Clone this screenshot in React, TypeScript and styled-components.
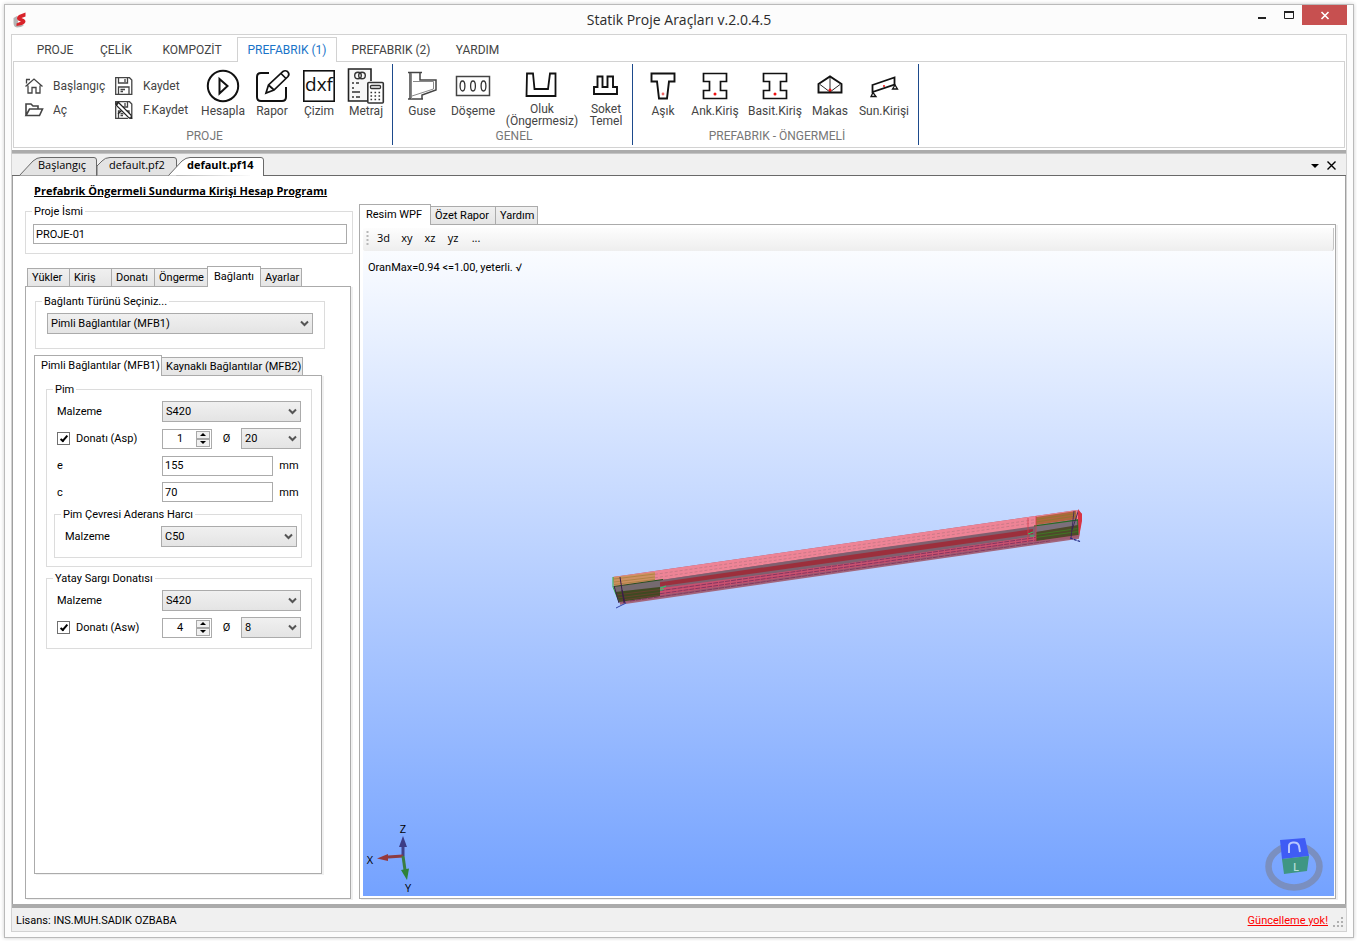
import React from "react";
import styled, { createGlobalStyle, css } from "styled-components";

const sans = `Roboto, "Liberation Sans", Arial, sans-serif`;
const ui = `"Open Sans", "Segoe UI", sans-serif`;

const GlobalStyle = createGlobalStyle`
  *, *::before, *::after { box-sizing: border-box; }
  body { margin: 0; background: #fff; font-family: ${sans}; font-size: 11px; color: #000; }
  button, input, select { font: inherit; color: inherit; margin: 0; }
  button { cursor: pointer; }
  svg { display: block; }
`;

/* ---------- window frame ---------- */

const Page = styled.div`
  display: flex;
  min-height: 100vh;
  padding: 4px 3px 3px 4px;
`;

const Window = styled.div`
  flex: 1;
  min-width: 0;
  display: flex;
  flex-direction: column;
  border: 1px solid #bababa;
  background: #fcfcfc;
  box-shadow: 0 0 4px rgba(0, 0, 0, 0.2);
  padding: 0 6px 5px;
`;

const TitleBar = styled.header`
  display: grid;
  grid-template-columns: 1fr auto 1fr;
  height: 29px;
`;

const AppLogo = styled.svg`
  align-self: center;
  margin-left: 2px;
`;

const AppTitle = styled.h1`
  margin: 0;
  font: 400 14px/30px ${ui};
  color: #2b2b2b;
`;

const WindowButtons = styled.div`
  display: flex;
  justify-content: flex-end;
  align-items: flex-start;
`;

const WindowButton = styled.button<{ $close?: boolean }>`
  display: flex;
  justify-content: center;
  width: ${(p) => (p.$close ? 45 : 27)}px;
  height: 20px;
  padding: 0;
  border: 0;
  background: ${(p) => (p.$close ? "#c75050" : "transparent")};
`;

const Client = styled.div`
  flex: 1;
  display: flex;
  flex-direction: column;
  border: 1px solid #d2d2d2;
  background: #fff;
`;

/* ---------- ribbon ---------- */

const RibbonTabs = styled.nav`
  display: flex;
  align-items: flex-end;
  height: 27px;
  padding-left: 13px;
  margin-bottom: -1px;
`;

const RibbonTab = styled.button<{ $w: number; $active?: boolean }>`
  width: ${(p) => p.$w}px;
  height: 25px;
  padding: 0;
  border: 1px solid ${(p) => (p.$active ? "#d2d2d2" : "transparent")};
  border-bottom: 0;
  background: ${(p) => (p.$active ? "#fff" : "transparent")};
  color: ${(p) => (p.$active ? "#1a74c8" : "#444")};
  font: 400 12px/22px ${sans};
  white-space: nowrap;
  position: relative;
`;

const RibbonBody = styled.div`
  display: flex;
  margin: 0 1px 2px;
  height: 87px;
  padding: 2px 0;
  border: 1px solid #d2d2d2;
`;

const RibbonGroup = styled.section<{ $pad: number; $w: number }>`
  display: flex;
  flex-direction: column;
  width: ${(p) => p.$w}px;
  border-right: 1px solid #1d4a8c;
  padding-top: 6px;
  & > div {
    padding-left: ${(p) => p.$pad}px;
  }
`;

const GroupItems = styled.div`
  display: flex;
  height: 58px;
`;

const GroupName = styled.h2`
  margin: 0;
  padding-left: 3px;
  text-align: center;
  font: 400 12px/16px ${sans};
  color: #777;
`;

const SmallColumn = styled.div<{ $w: number }>`
  display: flex;
  flex-direction: column;
  width: ${(p) => p.$w}px;
  padding-top: 4px;
`;

const SmallButton = styled.button`
  display: flex;
  align-items: center;
  gap: 9px;
  height: 24px;
  padding: 0;
  border: 0;
  background: transparent;
  font: 400 12px/16px ${sans};
  color: #444;
`;

const LargeButton = styled.button<{ $w: number; $two?: boolean }>`
  display: flex;
  flex-direction: column;
  align-items: center;
  width: ${(p) => p.$w}px;
  padding: 0;
  border: 0;
  background: transparent;
  font: 400 12px/${(p) => (p.$two ? 12 : 16)}px ${sans};
  color: #444;
  white-space: pre;
  svg {
    margin-bottom: 1px;
    flex: none;
    overflow: visible;
  }
`;

/* ---------- document tabs ---------- */

const DocStrip = styled.div`
  display: flex;
  align-items: flex-end;
  height: 26px;
  border-top: 3px solid #ababab;
  border-bottom: 1px solid #696969;
  background: #f0f0f0;
  box-shadow: inset 0 1px 0 #c4c4c4;
  padding: 0 10px 0 7px;
`;

const DocTab = styled.button<{ $w: number; $start: number; $active?: boolean }>`
  position: relative;
  width: ${(p) => p.$w}px;
  height: 19px;
  margin: 0 0 -1px ${(p) => (p.$active ? -9 : 0)}px;
  padding: 0 0 4px ${(p) => p.$start}px;
  border: 0;
  background: transparent;
  text-align: left;
  white-space: nowrap;
  font: ${(p) => (p.$active ? 700 : 400)} 11px/15px ${ui};
  svg {
    position: absolute;
    inset: 0;
  }
  span {
    position: relative;
  }
`;

const DocTools = styled.div`
  display: flex;
  align-items: center;
  gap: 8px;
  margin-left: auto;
  height: 20px;
`;

const IconButton = styled.button`
  display: flex;
  padding: 0;
  border: 0;
  background: transparent;
`;

/* ---------- workspace ---------- */

const Workspace = styled.main`
  flex: 1;
  display: flex;
  gap: 6px;
  border: solid #a0a0a0;
  border-width: 0 1px;
  padding: 0 9px 5px 12px;
`;

const Side = styled.aside`
  display: flex;
  flex-direction: column;
  flex: none;
  width: 328px;
  padding-top: 8px;
`;

const ProgramTitle = styled.h2`
  margin: 0 0 6px 9px;
  font: 700 11px/14px ${ui};
  text-decoration: underline;
  white-space: nowrap;
`;

const Group = styled.fieldset<{ $inset?: string }>`
  min-width: 0;
  margin: ${(p) => p.$inset ?? "0"};
  padding: 0;
  border: 1px solid #dcdcdc;
`;

const GroupBody = styled.div<{ $pad: string }>`
  padding: ${(p) => p.$pad};
`;

const Legend = styled.legend`
  padding: 2px 2px 0;
  margin-left: 6px;
  line-height: 12px;
`;

const TextBox = styled.input`
  display: block;
  width: 100%;
  height: 20px;
  padding: 0 2px;
  border: 1px solid #ababab;
  border-radius: 0;
  background: #fff;
  outline: none;
`;

const Tabs = styled.div<{ $indent?: number }>`
  display: flex;
  align-items: flex-end;
  height: 21px;
  margin-bottom: -1px;
  padding-left: ${(p) => p.$indent ?? 1}px;
`;

const Tab = styled.button<{ $w: number; $active?: boolean }>`
  position: relative;
  flex: none;
  width: ${(p) => p.$w}px;
  height: 19px;
  padding: 0 0 0 4px;
  border: 1px solid #ababab;
  margin-left: -1px;
  background: linear-gradient(#f0f0f0, #e5e5e5);
  text-align: left;
  line-height: 17px;
  white-space: nowrap;
  ${(p) =>
    p.$active &&
    css`
      z-index: 1;
      height: 21px;
      padding: 0 0 2px 6px;
      border-bottom: 0;
      background: #fff;
    `}
`;

const TabPage = styled.div<{ $pad: string }>`
  flex: 1;
  display: flex;
  flex-direction: column;
  padding: ${(p) => p.$pad};
  border: 1px solid #ababab;
  background: #fff;
  box-shadow: 2px 1px 0 #f0f0f0;
`;

const SideTabs = styled.div<{ $inset: string }>`
  flex: 1;
  display: flex;
  flex-direction: column;
  margin: ${(p) => p.$inset};
`;

const Row = styled.div<{ $h?: number }>`
  display: flex;
  align-items: center;
  height: ${(p) => p.$h ?? 21}px;
`;

const Rows = styled.div`
  display: flex;
  flex-direction: column;
  gap: 6px;
`;

const RowLabel = styled.label<{ $w?: number }>`
  display: flex;
  align-items: center;
  flex: none;
  gap: 6px;
  width: ${(p) => p.$w ?? 115}px;
  padding-left: 10px;
`;

const Field = styled.div<{ $w: number }>`
  flex: none;
  width: ${(p) => p.$w}px;
`;

const Unit = styled.span<{ $w?: number }>`
  width: ${(p) => p.$w ?? 29}px;
  text-align: center;
`;

const Check = styled.input`
  appearance: none;
  position: relative;
  width: 13px;
  height: 13px;
  border: 1px solid #707070;
  background: #fff;
  &:checked::after {
    content: "";
    position: absolute;
    left: 4px;
    top: 1px;
    width: 4px;
    height: 8px;
    border: solid #000;
    border-width: 0 2px 2px 0;
    transform: rotate(40deg);
  }
`;

const SelectBox = styled.div<{ $w?: number }>`
  position: relative;
  flex: none;
  width: ${(p) => (p.$w ? `${p.$w}px` : "100%")};
  height: 21px;
  select {
    appearance: none;
    width: 100%;
    height: 21px;
    padding: 0 16px 0 3px;
    border: 1px solid #ababab;
    border-radius: 0;
    background: linear-gradient(#f0f0f0, #e4e4e4);
    outline: none;
  }
  svg {
    position: absolute;
    right: 4px;
    top: 7px;
    pointer-events: none;
  }
`;

const Spin = styled.div`
  display: flex;
  flex: none;
  width: 50px;
  height: 20px;
  padding: 1px;
  border: 1px solid #ababab;
  background: #fff;
  input {
    appearance: textfield;
    width: 32px;
    padding: 0;
    border: 0;
    outline: none;
    text-align: center;
    background: transparent;
  }
  input::-webkit-inner-spin-button {
    appearance: none;
  }
`;

const SpinButtons = styled.div`
  display: flex;
  flex-direction: column;
  button {
    display: flex;
    align-items: center;
    justify-content: center;
    width: 14px;
    height: 8px;
    padding: 0;
    border: 1px solid #a8a8a8;
    background: #f0f0f0;
  }
`;

/* ---------- viewer ---------- */

const Viewer = styled.section`
  flex: 1;
  min-width: 0;
  display: flex;
  flex-direction: column;
  padding-top: 28px;
`;

const ToolStrip = styled.div`
  display: flex;
  align-items: center;
  height: 23px;
  padding: 0 0 3px 3px;
  border-right: 1px solid #c4c4c4;
  border-radius: 2px 0 3px 2px;
  background: linear-gradient(#fdfdfd, #eeeeee);
`;

const ToolButton = styled.button<{ $w: number }>`
  width: ${(p) => p.$w}px;
  padding: 0;
  border: 0;
  background: transparent;
  font: 400 11px/18px ${ui};
`;

const Canvas = styled.div`
  flex: 1;
  position: relative;
  min-height: 400px;
  background: linear-gradient(#fafcff, #74a2ff);
`;

const ResultLine = styled.p`
  margin: 0;
  padding: 10px 5px;
  line-height: 14px;
`;

const Scene = styled.svg`
  position: absolute;
  inset: 0;
  width: 100%;
  height: 100%;
`;

const Axes = styled.svg`
  position: absolute;
  left: 0;
  bottom: 0;
`;

const ViewCube = styled.svg`
  position: absolute;
  right: 10px;
  bottom: 2px;
`;

/* ---------- status bar ---------- */

const StatusBar = styled.footer`
  display: flex;
  align-items: center;
  height: 27px;
  padding: 2px 2px 0 4px;
  border-top: 4px solid #ababab;
  background: #f0f0f0;
  a {
    margin-left: auto;
    margin-right: 1px;
    color: #f00;
  }
`;

/* ---------- small pieces ---------- */

function Select({ w, value, label, id }: { w?: number; value: string; label?: string; id?: string }) {
  return (
    <SelectBox $w={w}>
      <select id={id} aria-label={label} defaultValue={value}>
        <option>{value}</option>
      </select>
      <svg width="9" height="8" viewBox="0 0 9 8">
        <path d="M1 1.5 L4.5 5 L8 1.5" fill="none" stroke="#555" strokeWidth="2" />
      </svg>
    </SelectBox>
  );
}

function Spinner({ value, label }: { value: number; label: string }) {
  return (
    <Spin>
      <input type="number" aria-label={label} defaultValue={value} />
      <SpinButtons>
        <button aria-label="+">
          <svg width="6" height="3"><path d="M0 3 L3 0 L6 3Z" /></svg>
        </button>
        <button aria-label="-">
          <svg width="6" height="3"><path d="M0 0 L3 3 L6 0Z" /></svg>
        </button>
      </SpinButtons>
    </Spin>
  );
}

const Big = ({ children }: { children: React.ReactNode }) => (
  <svg width="38" height="32" viewBox="-3 0 38 32" fill="none" stroke="#111" strokeWidth="1.6">
    {children}
  </svg>
);

const IconPlay = () => (
  <Big>
    <circle cx="16" cy="16" r="15.2" strokeWidth="2" />
    <path d="M12.5 9 L20.5 16 L12.5 23.5Z" strokeWidth="2" />
  </Big>
);

const IconEdit = () => (
  <Big>
    <path d="M13 3 H5 Q1 3 1 7 V27 Q1 31 5 31 H26 Q30 31 30 27 V17" strokeWidth="2" />
    <path d="M10 23 L12.5 15 L27 1.5 Q29 0 31.5 1.5 Q34 4 32 6.5 L18 20Z M12.5 15 L18 20 M25 3.5 L30 8.5" strokeWidth="1.7" />
  </Big>
);

const IconDxf = () => (
  <Big>
    <rect x="0.8" y="0.8" width="30.4" height="30.4" />
    <text x="16" y="21" textAnchor="middle" fontFamily="Open Sans, sans-serif" fontSize="19" fill="#111" stroke="none">
      dxf
    </text>
  </Big>
);

const IconQuantity = () => (
  <Big>
    <path d="M17 31 H-1.5 V-1 H21 V11" fill="#f7f7f7" stroke="#222" />
    <circle cx="8" cy="5.5" r="3.3" stroke="#333" strokeWidth="1.4" />
    <circle cx="12" cy="5.5" r="3.3" stroke="#333" strokeWidth="1.4" />
    <path d="M2 13 H4 M6 13 H9 M2 18 H4 M2 22 H10 M2 27 H4 M6 27 H10" stroke="#333" strokeWidth="1.4" />
    <rect x="17.8" y="12.5" width="15.5" height="20.5" rx="1" fill="#fff" stroke="#333" />
    <rect x="20.5" y="15.5" width="10" height="3" rx="1" stroke="#333" strokeWidth="1.3" />
    <path d="M20.5 22.5 H31 M20.5 26 H31 M20.5 29.5 H31" stroke="#333" strokeWidth="1.6" strokeDasharray="1.6 2.4" />
  </Big>
);

const IconCorbel = () => (
  <Big>
    <path d="M2 2.5 H16 M4 2.5 V29 M2 29 H17 M14 2.5 V10 H30 V20 L16 25 V29" stroke="#444" strokeWidth="1.5" />
    <path d="M5.5 3 V29 M7 11.5 H27.5 V19 L6 26" stroke="#888" strokeWidth="1" />
  </Big>
);

const IconSlab = () => (
  <Big>
    <rect x="-0.5" y="6.5" width="33" height="19" stroke="#444" strokeWidth="1.5" />
    <ellipse cx="5.5" cy="16" rx="2.4" ry="5" stroke="#333" strokeWidth="1.3" />
    <ellipse cx="16" cy="16" rx="2.4" ry="5" stroke="#333" strokeWidth="1.3" />
    <ellipse cx="26.5" cy="16" rx="2.4" ry="5" stroke="#333" strokeWidth="1.3" />
  </Big>
);

const IconGutter = () => (
  <Big>
    <path d="M1 3.5 H7 L8.5 19 H22 L24 3.5 H29.5 V26 H0.5Z" strokeWidth="1.8" />
  </Big>
);

const IconSocket = () => (
  <Big>
    <path d="M7.5 6.5 H12.5 V17 H17.5 V6.5 H23 V17 H27 V24 H4 V17 H7.5Z" strokeWidth="1.9" />
  </Big>
);

const IconPurlin = () => (
  <Big>
    <path d="M4.5 3.5 H27.5 V11.5 H22 L20 28.5 H12 L10 11.5 H4.5Z" strokeWidth="1.9" />
    <circle cx="16" cy="24" r="1.4" fill="#e66" stroke="none" />
  </Big>
);

const IconBeam = () => (
  <Big>
    <path d="M4.5 3.5 H27.5 V11.5 H21.5 V20.5 H27.5 V28.5 H4.5 V20.5 H10.5 V11.5 H4.5Z" strokeWidth="1.7" />
    <circle cx="16" cy="24" r="1.5" fill="#e11" stroke="none" />
  </Big>
);

const IconTruss = () => (
  <Big>
    <path d="M4.5 14 L16 6.5 L27.5 14 V22.5 H4.5Z" strokeWidth="1.9" />
    <path d="M16 7 V22 M6 14.5 L16 22 L26 14.5" strokeWidth="0.9" />
    <circle cx="16" cy="20" r="1.5" fill="#e11" stroke="none" />
  </Big>
);

const IconCanopy = () => (
  <Big>
    <path d="M4.5 15 L26.5 7.5 V14.5 L4.5 22Z" strokeWidth="1.8" />
    <path d="M5 22.5 L3 26.5 H8Z M27 15 L24.5 19 H29.5Z" strokeWidth="1.3" />
    <circle cx="16" cy="16" r="1" fill="#e11" stroke="none" />
  </Big>
);

const Small = ({ children }: { children: React.ReactNode }) => (
  <svg width="20" height="20" viewBox="0 0 20 20" fill="none" stroke="#444" strokeWidth="1.3">
    {children}
  </svg>
);

const IconHome = () => (
  <Small>
    <path d="M1.5 10.5 L10 3 L18.5 10.5 M4 9.5 V17 H8 V11.5 H12 V17 H16 V9.5 M2.5 3.5 V7.5 M2 3.5 H6" />
  </Small>
);

const IconFolder = () => (
  <Small>
    <path d="M2 15.5 V4 H7 L9 6 H14 V9 M2 15.5 L5.5 9 H18.5 L15.5 15.5Z" strokeWidth="1.6" />
  </Small>
);

const IconSave = ({ slashed }: { slashed?: boolean }) => (
  <Small>
    <path d="M1.7 1.7 H15.5 L17.8 4 V18.3 H1.7Z M4.5 2 V7 H13.5 V2 M11 3 V6 M4.5 18 V11 H15 V18 M6.5 13.5 H11 M6.5 15.5 H9" />
    {slashed && (
      <>
        <path d="M3 4 L16 17.5" stroke="#fff" strokeWidth="4" />
        <path d="M2 3 L4.5 2.5 L17 15 L17.5 18 L14.5 17.5 L2.5 5.5Z M4.5 2.5 L2.5 5.5 M4 14 L7 11" strokeWidth="1.2" stroke="#222" />
      </>
    )}
  </Small>
);

/* Beam seen in perspective: long faces, rebar lines and the two end blocks. */
function BeamDrawing() {
  return (
    <Scene viewBox="363 251 971 645" preserveAspectRatio="xMidYMid meet" aria-hidden="true">
      <polygon points="613,577 1077,510 1082,514 1079,538 620,604" fill="#9c5b72" />
      <polygon points="613,577 1077,510 1079,522 850,552 614,587" fill="#ee8496" />
      <path d="M640 576.5 L1060 516 M650 578.5 L1060 519" stroke="#c27684" strokeWidth="0.8" strokeDasharray="3 2" fill="none" />
      <polygon points="614,587 850,552 1079,520 1079,530 850,563 616,594" fill="#80606f" />
      <polygon points="655,583 850,555 1033,529 1033,534 850,560 655,587" fill="#9c2f3c" />
      <polygon points="617,594 850,563 1079,530 1079,535 850,568 619,601" fill="#c9506f" />
      <path d="M630 595 L1050 535.5 M630 598 L1050 538 M630 601 L1050 541" stroke="#843660" strokeWidth="1" strokeDasharray="5 1" fill="none" />
      <path d="M620 604 L1079 538" stroke="#a3667c" strokeWidth="1.4" />

      <polygon points="613,577 655,572 655,580 614,586" fill="#cf9062" />
      <path d="M614 579 L655 574 M614 582 L655 577 M614 584.5 L655 579.5" stroke="#a87f3e" strokeWidth="0.8" />
      <polygon points="615,587 660,580 660,587 616,592" fill="#756a70" />
      <polygon points="615,592 660,587 660,596 619,602" fill="#3f4a22" />
      <path d="M616 595 L660 589.5 M617 598 L660 592.5 M618 600.5 L660 595" stroke="#6d4030" strokeWidth="0.8" />
      <path d="M613 577 V587 L619 602" stroke="#2fae3c" strokeWidth="1" fill="none" />
      <path d="M614 586.5 L663 579.5" stroke="#24501d" strokeWidth="1.2" />
      <path d="M614 586 L619 603 M620 577 L624 603 M622 590 L625 603" stroke="#3a1c4c" strokeWidth="1" fill="none" />
      <path d="M616 608 L626 603" stroke="#3344aa" strokeWidth="1" />
      <path d="M661 588 L666 586 M662 590 L664 589 M661 591 V587" stroke="#27d36b" strokeWidth="1" />

      <polygon points="1036,517 1076,511 1077,519 1036,525" fill="#b0653f" />
      <path d="M1036 519.5 L1076 513.5 M1036 522 L1076 516" stroke="#8a7a2c" strokeWidth="0.8" />
      <polygon points="1036,525 1078,519 1078,526 1036,532" fill="#7b6f7b" />
      <polygon points="1036,532 1078,525 1078,535 1036,541" fill="#4d4a2a" />
      <path d="M1036 534.5 L1078 528.5 M1036 537.5 L1078 531.5" stroke="#3f7a22" strokeWidth="0.9" />
      <path d="M1034 526 L1078 520 V535" stroke="#256b20" strokeWidth="1.2" fill="none" />
      <path d="M1028 518 V541 M1036 516 V541" stroke="#d63b4d" strokeWidth="0.8" />
      <path d="M1074 511 L1071 538 M1078 512 L1072 530" stroke="#35205a" strokeWidth="0.8" />
      <polygon points="1078,509 1082,514 1082,521 1079,537 1078,520" fill="#d83444" />
      <path d="M1070 538 L1080 541.5" stroke="#222a88" strokeWidth="1.2" strokeDasharray="3 1" />
      <path d="M1028 534 L1033 532 M1030 536 H1034" stroke="#27d36b" strokeWidth="1" />
    </Scene>
  );
}

function AxisTriad() {
  return (
    <Axes width="60" height="80" viewBox="363 816 60 80" fontFamily="Open Sans, sans-serif" fontSize="11" textAnchor="middle">
      <path d="M403 856 V846" stroke="#41418a" strokeWidth="3" />
      <polygon points="403,836 407,847 399,847" fill="#3c3c86" />
      <path d="M403 856 L388 857" stroke="#8c3c42" strokeWidth="3" />
      <polygon points="377,858.5 388,854 388,861" fill="#96393c" />
      <path d="M403 856 L405 870" stroke="#3a7d42" strokeWidth="3" />
      <polygon points="407,880 401,870 409,868.5" fill="#2f8238" />
      <text x="403" y="833">Z</text>
      <text x="370" y="864">X</text>
      <text x="408" y="892">Y</text>
    </Axes>
  );
}

function CubeNavigator() {
  return (
    <ViewCube width="60" height="60" viewBox="1264 834 60 60" fontFamily="Open Sans, sans-serif" textAnchor="middle">
      <ellipse cx="1294" cy="866.5" rx="25.5" ry="21" fill="none" stroke="#7a8fc0" strokeWidth="6.5" />
      <polygon points="1280,840 1305,838 1309,856 1282,859" fill="#3f5cf5" />
      <polygon points="1282,859 1309,856 1307,871 1284,874" fill="#3f9683" />
      <path d="M1289 853 V846 Q1289 843 1293 842.5 Q1298 842 1299 846 L1300 852" fill="none" stroke="#b9c8ff" strokeWidth="2" />
      <text x="1296" y="871" fontSize="11" fontWeight="600" fill="#b5dfd8">L</text>
    </ViewCube>
  );
}

/* ---------- application ---------- */

export default function App() {
  return (
    <Page>
      <GlobalStyle />
      <Window>
        <TitleBar>
          <AppLogo width="16" height="16" viewBox="0 0 16 16">
            <path d="M0.5 6 L4 4 L5 9 V12 L11 13.5 Q8 15.5 4 15.5 Q0.5 15 0.5 11Z" fill="#b4b4b4" />
            <path d="M12.5 0.5 L6 3 Q3.5 4.5 4 7 Q4.5 8.5 8 9.5 L3.5 11.5 V14 L9 13 Q12.5 11.5 12.5 9 Q12 7 8.5 6 L12.5 4.5Z" fill="#d8232a" />
          </AppLogo>
          <AppTitle>Statik Proje Araçları v.2.0.4.5</AppTitle>
          <WindowButtons>
            <WindowButton aria-label="Küçült">
              <svg width="10" height="20"><path d="M1 13 H9" stroke="#222" strokeWidth="2" /></svg>
            </WindowButton>
            <WindowButton aria-label="Büyüt">
              <svg width="10" height="20"><path d="M0.5 6 V13.5 H9.5 V6" stroke="#222" fill="none" /><path d="M0 7 H10" stroke="#222" strokeWidth="2" /></svg>
            </WindowButton>
            <WindowButton $close aria-label="Kapat">
              <svg width="10" height="20"><path d="M1.5 7 L8.5 14 M8.5 7 L1.5 14" stroke="#fff" strokeWidth="1.6" /></svg>
            </WindowButton>
          </WindowButtons>
        </TitleBar>

        <Client>
          <RibbonTabs>
            <RibbonTab $w={60}>PROJE</RibbonTab>
            <RibbonTab $w={62}>ÇELİK</RibbonTab>
            <RibbonTab $w={90}>KOMPOZİT</RibbonTab>
            <RibbonTab $w={100} $active>PREFABRIK (1)</RibbonTab>
            <RibbonTab $w={108}>PREFABRIK (2)</RibbonTab>
            <RibbonTab $w={65}>YARDIM</RibbonTab>
          </RibbonTabs>
          <RibbonBody>
            <RibbonGroup $w={379} $pad={10}>
              <GroupItems>
                <SmallColumn $w={90}>
                  <SmallButton><IconHome />Başlangıç</SmallButton>
                  <SmallButton><IconFolder />Aç</SmallButton>
                </SmallColumn>
                <SmallColumn $w={84}>
                  <SmallButton><IconSave />Kaydet</SmallButton>
                  <SmallButton><IconSave slashed />F.Kaydet</SmallButton>
                </SmallColumn>
                <LargeButton $w={50}><IconPlay />Hesapla</LargeButton>
                <LargeButton $w={48}><IconEdit />Rapor</LargeButton>
                <LargeButton $w={46}><IconDxf />Çizim</LargeButton>
                <LargeButton $w={48}><IconQuantity />Metraj</LargeButton>
              </GroupItems>
              <GroupName>PROJE</GroupName>
            </RibbonGroup>
            <RibbonGroup $w={240} $pad={3}>
              <GroupItems>
                <LargeButton $w={52}><IconCorbel />Guse</LargeButton>
                <LargeButton $w={50}><IconSlab />Döşeme</LargeButton>
                <LargeButton $w={88} $two><IconGutter />{"Oluk\n(Öngermesiz)"}</LargeButton>
                <LargeButton $w={40} $two><IconSocket />{"Soket\nTemel"}</LargeButton>
              </GroupItems>
              <GroupName>GENEL</GroupName>
            </RibbonGroup>
            <RibbonGroup $w={286} $pad={10}>
              <GroupItems>
                <LargeButton $w={40}><IconPurlin />Aşık</LargeButton>
                <LargeButton $w={64}><IconBeam />Ank.Kiriş</LargeButton>
                <LargeButton $w={56}><IconBeam />Basit.Kiriş</LargeButton>
                <LargeButton $w={54}><IconTruss />Makas</LargeButton>
                <LargeButton $w={54}><IconCanopy />Sun.Kirişi</LargeButton>
              </GroupItems>
              <GroupName>PREFABRIK - ÖNGERMELİ</GroupName>
            </RibbonGroup>
          </RibbonBody>

          <DocStrip>
            <DocTab $w={78} $start={19}>
              <svg width="78" height="19"><path d="M0.5 18.5 L14 4 Q18 0.5 22 0.5 H75 Q77.5 0.5 77.5 3 V18.5" fill="#e3e3e3" stroke="#696969" /></svg>
              <span>Başlangıç</span>
            </DocTab>
            <DocTab $w={80} $start={12}>
              <svg width="80" height="19"><path d="M0 18.5 V9 L5 4 Q8 0.5 13 0.5 H77 Q79.5 0.5 79.5 3 V18.5" fill="#e3e3e3" stroke="#696969" /></svg>
              <span>default.pf2</span>
            </DocTab>
            <DocTab $w={96} $start={19} $active>
              <svg width="96" height="19"><path d="M0.5 18.5 L14 4 Q18 0.5 22 0.5 H93 Q95.5 0.5 95.5 3 V19" fill="#fff" stroke="#696969" /></svg>
              <span>default.pf14</span>
            </DocTab>
            <DocTools>
              <IconButton aria-label="Belgeler">
                <svg width="8" height="5"><path d="M0 1 H8 L4 5Z" /></svg>
              </IconButton>
              <IconButton aria-label="Belgeyi kapat">
                <svg width="9" height="9"><path d="M0.5 0.5 L8.5 8.5 M8.5 0.5 L0.5 8.5" stroke="#000" strokeWidth="1.4" /></svg>
              </IconButton>
            </DocTools>
          </DocStrip>

          <Workspace>
            <Side>
              <ProgramTitle>Prefabrik Öngermeli Sundurma Kirişi Hesap Programı</ProgramTitle>
              <Group>
                <Legend>Proje İsmi</Legend>
                <GroupBody $pad="6px 5px 9px 7px">
                  <TextBox aria-label="Proje İsmi" defaultValue="PROJE-01" />
                </GroupBody>
              </Group>

              <SideTabs $inset="12px 2px 0 0">
                <Tabs $indent={3}>
                  <Tab $w={43}>Yükler</Tab>
                  <Tab $w={43}>Kiriş</Tab>
                  <Tab $w={44}>Donatı</Tab>
                  <Tab $w={54}>Öngerme</Tab>
                  <Tab $w={54} $active>Bağlantı</Tab>
                  <Tab $w={42}>Ayarlar</Tab>
                </Tabs>
                <TabPage $pad="7px 0 24px 8px">
                  <Group $inset="0 25px 6px 1px">
                    <Legend>Bağlantı Türünü Seçiniz...</Legend>
                    <GroupBody $pad="5px 11px 14px">
                      <Select value="Pimli Bağlantılar (MFB1)" label="Bağlantı Türünü Seçiniz" />
                    </GroupBody>
                  </Group>
                  <SideTabs $inset="0 28px 0 0">
                    <Tabs>
                      <Tab $w={128} $active>Pimli Bağlantılar (MFB1)</Tab>
                      <Tab $w={142}>Kaynaklı Bağlantılar (MFB2)</Tab>
                    </Tabs>
                    <TabPage $pad="6px 9px 6px 11px">
                      <Group>
                        <Legend>Pim</Legend>
                        <GroupBody $pad="5px 0 8px">
                          <Rows>
                            <Row>
                              <RowLabel htmlFor="pin-material">Malzeme</RowLabel>
                              <Select id="pin-material" w={139} value="S420" />
                            </Row>
                            <Row>
                              <RowLabel><Check type="checkbox" defaultChecked />Donatı (Asp)</RowLabel>
                              <Spinner value={1} label="Donatı (Asp) adet" />
                              <Unit>Ø</Unit>
                              <Select w={60} value="20" label="Donatı (Asp) çap" />
                            </Row>
                            <Row>
                              <RowLabel htmlFor="pin-e">e</RowLabel>
                              <Field $w={111}><TextBox id="pin-e" defaultValue="155" /></Field>
                              <Unit $w={32}>mm</Unit>
                            </Row>
                            <Row $h={20}>
                              <RowLabel htmlFor="pin-c">c</RowLabel>
                              <Field $w={111}><TextBox id="pin-c" defaultValue="70" /></Field>
                              <Unit $w={32}>mm</Unit>
                            </Row>
                          </Rows>
                          <Group $inset="5px 9px 0 7px">
                            <Legend>Pim Çevresi Aderans Harcı</Legend>
                            <GroupBody $pad="5px 0 10px">
                              <Row>
                                <RowLabel $w={106} htmlFor="grout-material">Malzeme</RowLabel>
                                <Select id="grout-material" w={136} value="C50" />
                              </Row>
                            </GroupBody>
                          </Group>
                        </GroupBody>
                      </Group>
                      <Group $inset="4px 0 0">
                        <Legend>Yatay Sargı Donatısı</Legend>
                        <GroupBody $pad="5px 0 10px">
                          <Rows>
                            <Row>
                              <RowLabel htmlFor="tie-material">Malzeme</RowLabel>
                              <Select id="tie-material" w={139} value="S420" />
                            </Row>
                            <Row>
                              <RowLabel><Check type="checkbox" defaultChecked />Donatı (Asw)</RowLabel>
                              <Spinner value={4} label="Donatı (Asw) adet" />
                              <Unit>Ø</Unit>
                              <Select w={60} value="8" label="Donatı (Asw) çap" />
                            </Row>
                          </Rows>
                        </GroupBody>
                      </Group>
                    </TabPage>
                  </SideTabs>
                </TabPage>
              </SideTabs>
            </Side>

            <Viewer>
              <Tabs>
                <Tab $w={72} $active>Resim WPF</Tab>
                <Tab $w={66}>Özet Rapor</Tab>
                <Tab $w={43}>Yardım</Tab>
              </Tabs>
              <TabPage $pad="3px 1px 2px 3px">
                <ToolStrip>
                  <svg width="3" height="16"><path d="M1.5 1 V16" stroke="#b8b8b8" strokeWidth="2" strokeDasharray="2 2" /></svg>
                  <ToolButton $w={29}>3d</ToolButton>
                  <ToolButton $w={18}>xy</ToolButton>
                  <ToolButton $w={28}>xz</ToolButton>
                  <ToolButton $w={18}>yz</ToolButton>
                  <ToolButton $w={28}>...</ToolButton>
                </ToolStrip>
                <Canvas>
                  <ResultLine>OranMax=0.94 &lt;=1.00, yeterli. √</ResultLine>
                  <BeamDrawing />
                  <AxisTriad />
                  <CubeNavigator />
                </Canvas>
              </TabPage>
            </Viewer>
          </Workspace>

          <StatusBar>
            <span>Lisans: INS.MUH.SADIK OZBABA</span>
            <a href="#guncelleme">Güncelleme yok!</a>
            <svg width="15" height="16" fill="#b0b0b0">
              <path d="M12 4h2v2h-2z M8 8h2v2h-2z M12 8h2v2h-2z M4 12h2v2h-2z M8 12h2v2h-2z M12 12h2v2h-2z" />
            </svg>
          </StatusBar>
        </Client>
      </Window>
    </Page>
  );
}
